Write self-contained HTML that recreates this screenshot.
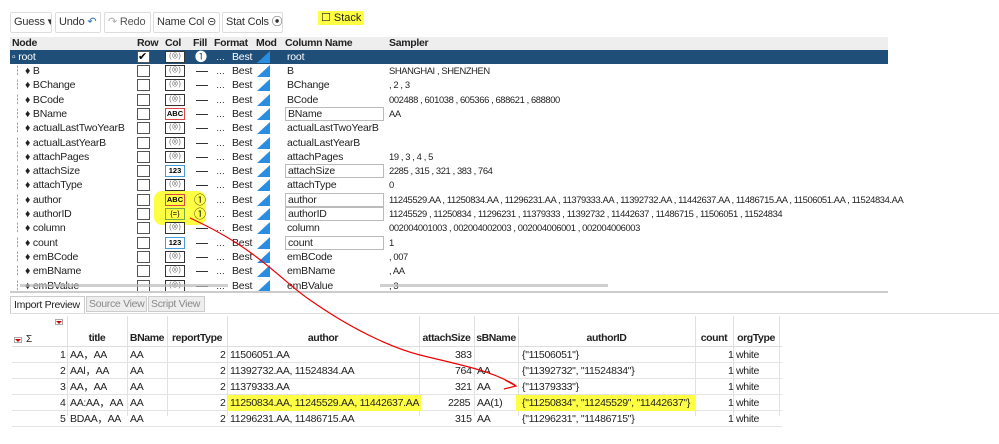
<!DOCTYPE html>
<html><head><meta charset="utf-8"><style>
*{box-sizing:border-box;margin:0;padding:0;white-space:nowrap}
body{width:999px;height:444px;background:#fff;font-family:"Liberation Sans","Noto Sans CJK SC",sans-serif;font-size:11px;color:#222;position:relative;overflow:hidden}
.a{position:absolute}
.btn{position:absolute;top:12px;height:21px;border:1px solid #ddd;border-radius:2px;background:#fff;font-size:11px;line-height:19px;padding:0 3px;color:#333;overflow:hidden;letter-spacing:-0.2px}
.hdr{position:absolute;left:10px;top:37px;width:878px;height:13px;background:#eee;font-weight:bold;font-size:10.5px;letter-spacing:-0.3px;line-height:13px}
.r{position:absolute;left:10px;width:878px;height:14px;line-height:14px;font-size:10.5px;letter-spacing:-0.2px}
.sel{background:#1f4e79;color:#fff}
.cb{position:absolute;left:127px;top:1px;width:13px;height:12px;border:1px solid #555;background:#fff}
.ci{position:absolute;left:155px;top:1px;width:20px;height:12px;border:1px solid #333;background:#fff;font-size:7px;line-height:10px;text-align:center;color:#666;letter-spacing:0}
.dash{position:absolute;left:186px;top:7px;width:12px;height:1px;background:#333}
.dots{position:absolute;left:206px;font-size:9px}
.best{position:absolute;left:222px}
.mod{position:absolute;left:247px;top:1px;width:0;height:0;border-left:13px solid transparent;border-bottom:12px solid #2a8de0}
.nm{position:absolute;left:2px}
.cn{position:absolute;left:275px;top:0;height:14px;width:99px;padding-left:2px}
.cn.b{border:1px solid #bbb;height:14px;line-height:12px}
.sm{position:absolute;left:379px;font-size:9.4px;letter-spacing:-0.4px}
.t{position:absolute;font-size:10.5px;letter-spacing:-0.3px}
.bh{position:absolute;top:332px;font-weight:bold;font-size:10.5px;letter-spacing:-0.4px;text-align:center}
.br{position:absolute;left:12px;width:770px;height:16px;line-height:16px;border-bottom:1px solid #e4e4e4}
.vl{position:absolute;top:316px;height:100px;width:1px;background:#e0e0e0}
.hl{background:#ffff44}
</style></head><body>
<div class="btn" style="left:10px;width:42px">Guess ▾</div>
<div class="btn" style="left:55px;width:46px">Undo <span style="color:#2a6fb5">↶</span></div>
<div class="btn" style="left:104px;width:47px;color:#555"><span style="color:#aaa">↷</span> Redo</div>
<div class="btn" style="left:153px;width:67px">Name Col ⊝</div>
<div class="btn" style="left:222px;width:61px">Stat Cols ⦿</div>
<div class="a hl" style="left:318px;top:11px;height:14px;padding:0 3px;font-size:11px;line-height:14px">☐ Stack</div>

<div class="hdr"><span class="a" style="left:2px">Node</span><span class="a" style="left:127px">Row</span><span class="a" style="left:155px">Col</span><span class="a" style="left:183px">Fill</span><span class="a" style="left:204px">Format</span><span class="a" style="left:246px">Mod</span><span class="a" style="left:275px">Column Name</span><span class="a" style="left:379px">Sampler</span></div>

<div class="r sel" style="top:50px"><span class="nm">▫ root</span><div class="cb" style="font-size:11px;line-height:10px;color:#000">✔</div><div class="ci">(⊗)</div><span class="a" style="left:185px;font-size:12px">➊</span><span class="dots" style="color:#fff">…</span><span class="best">Best</span><div class="mod"></div><span class="cn">root</span></div>

<div class="r" style="top:64px"><span class="nm">┆ ♦ B</span><div class="cb"></div><div class="ci">(⊗)</div><div class="dash"></div><span class="dots">…</span><span class="best">Best</span><div class="mod"></div><span class="cn">B</span><span class="sm">SHANGHAI , SHENZHEN</span></div>
<div class="r" style="top:78.3px"><span class="nm">┆ ♦ BChange</span><div class="cb"></div><div class="ci">(⊗)</div><div class="dash"></div><span class="dots">…</span><span class="best">Best</span><div class="mod"></div><span class="cn">BChange</span><span class="sm"> , 2 , 3</span></div>
<div class="r" style="top:92.6px"><span class="nm">┆ ♦ BCode</span><div class="cb"></div><div class="ci">(⊗)</div><div class="dash"></div><span class="dots">…</span><span class="best">Best</span><div class="mod"></div><span class="cn">BCode</span><span class="sm">002488 , 601038 , 605366 , 688621 , 688800</span></div>
<div class="r" style="top:106.9px"><span class="nm">┆ ♦ BName</span><div class="cb"></div><div class="ci" style="border-color:#d44;color:#000;font-weight:bold;font-size:7.5px">ABC</div><div class="dash"></div><span class="dots">…</span><span class="best">Best</span><div class="mod"></div><span class="cn b">BName</span><span class="sm">AA</span></div>
<div class="r" style="top:121.2px"><span class="nm">┆ ♦ actualLastTwoYearB</span><div class="cb"></div><div class="ci">(⊗)</div><div class="dash"></div><span class="dots">…</span><span class="best">Best</span><div class="mod"></div><span class="cn">actualLastTwoYearB</span></div>
<div class="r" style="top:135.5px"><span class="nm">┆ ♦ actualLastYearB</span><div class="cb"></div><div class="ci">(⊗)</div><div class="dash"></div><span class="dots">…</span><span class="best">Best</span><div class="mod"></div><span class="cn">actualLastYearB</span></div>
<div class="r" style="top:149.8px"><span class="nm">┆ ♦ attachPages</span><div class="cb"></div><div class="ci">(⊗)</div><div class="dash"></div><span class="dots">…</span><span class="best">Best</span><div class="mod"></div><span class="cn">attachPages</span><span class="sm">19 , 3 , 4 , 5</span></div>
<div class="r" style="top:164.1px"><span class="nm">┆ ♦ attachSize</span><div class="cb"></div><div class="ci" style="border-color:#4a9ad8;color:#000;font-weight:bold;font-size:7.5px">123</div><div class="dash"></div><span class="dots">…</span><span class="best">Best</span><div class="mod"></div><span class="cn b">attachSize</span><span class="sm">2285 , 315 , 321 , 383 , 764</span></div>
<div class="r" style="top:178.4px"><span class="nm">┆ ♦ attachType</span><div class="cb"></div><div class="ci">(⊗)</div><div class="dash"></div><span class="dots">…</span><span class="best">Best</span><div class="mod"></div><span class="cn">attachType</span><span class="sm">0</span></div>
<div class="a hl" style="left:154px;top:191px;width:52px;height:34px;border-radius:8px"></div>
<div class="r" style="top:192.7px"><span class="nm">┆ ♦ author</span><div class="cb"></div><div class="ci" style="border-color:#d44;color:#000;font-weight:bold;font-size:7.5px;background:#ff4">ABC</div><span class="a" style="left:184px;font-size:12px">①</span><span class="dots">…</span><span class="best">Best</span><div class="mod"></div><span class="cn b">author</span><span class="sm">11245529.AA , 11250834.AA , 11296231.AA , 11379333.AA , 11392732.AA , 11442637.AA , 11486715.AA , 11506051.AA , 11524834.AA</span></div>
<div class="r" style="top:207px"><span class="nm">┆ ♦ authorID</span><div class="cb"></div><div class="ci" style="border-color:#7a4;color:#000;font-size:7.5px;background:#ff4">{=}</div><span class="a" style="left:184px;font-size:12px">①</span><span class="dots">…</span><span class="best">Best</span><div class="mod"></div><span class="cn b">authorID</span><span class="sm">11245529 , 11250834 , 11296231 , 11379333 , 11392732 , 11442637 , 11486715 , 11506051 , 11524834</span></div>
<div class="r" style="top:221.3px"><span class="nm">┆ ♦ column</span><div class="cb"></div><div class="ci">(⊗)</div><div class="dash"></div><span class="dots">…</span><span class="best">Best</span><div class="mod"></div><span class="cn">column</span><span class="sm">002004001003 , 002004002003 , 002004006001 , 002004006003</span></div>
<div class="r" style="top:235.6px"><span class="nm">┆ ♦ count</span><div class="cb"></div><div class="ci" style="border-color:#4a9ad8;color:#000;font-weight:bold;font-size:7.5px">123</div><div class="dash"></div><span class="dots">…</span><span class="best">Best</span><div class="mod"></div><span class="cn b">count</span><span class="sm">1</span></div>
<div class="r" style="top:249.9px"><span class="nm">┆ ♦ emBCode</span><div class="cb"></div><div class="ci">(⊗)</div><div class="dash"></div><span class="dots">…</span><span class="best">Best</span><div class="mod"></div><span class="cn">emBCode</span><span class="sm"> , 007</span></div>
<div class="r" style="top:264.2px"><span class="nm">┆ ♦ emBName</span><div class="cb"></div><div class="ci">(⊗)</div><div class="dash"></div><span class="dots">…</span><span class="best">Best</span><div class="mod"></div><span class="cn">emBName</span><span class="sm"> , AA</span></div>
<div class="r" style="top:278.5px"><span class="nm">┆ ♦ emBValue</span><div class="cb"></div><div class="ci">(⊗)</div><div class="dash"></div><span class="dots">…</span><span class="best">Best</span><div class="mod"></div><span class="cn">emBValue</span><span class="sm"> , 3</span></div>
<div class="a" style="left:20px;top:284px;width:208px;height:3px;background:#bbb;opacity:.7"></div>
<div class="a" style="left:380px;top:284px;width:228px;height:3px;background:#bbb;opacity:.7"></div>
<div class="a" style="left:10px;top:291px;width:878px;height:2px;background:#ccc"></div>

<div class="a" style="left:10px;top:296px;width:75px;height:17px;border:1px solid #ccc;border-bottom:none;background:#fff;line-height:16px;padding-left:3px;font-size:10.5px;letter-spacing:-0.3px">Import Preview</div>
<div class="a" style="left:86px;top:296px;width:61px;height:16px;border:1px solid #ccc;background:#eee;line-height:15px;padding-left:2px;color:#888;font-size:10.5px;letter-spacing:-0.3px">Source View</div>
<div class="a" style="left:148px;top:296px;width:57px;height:16px;border:1px solid #ccc;background:#eee;line-height:15px;padding-left:2px;color:#888;font-size:10.5px;letter-spacing:-0.3px">Script View</div>
<div class="a" style="left:10px;top:313px;width:990px;height:1px;background:#ddd"></div>

<div class="vl" style="left:67px"></div><div class="vl" style="left:127px"></div><div class="vl" style="left:167px"></div><div class="vl" style="left:227px"></div><div class="vl" style="left:419px"></div><div class="vl" style="left:474px"></div><div class="vl" style="left:518px"></div><div class="vl" style="left:695px"></div><div class="vl" style="left:733px"></div><div class="vl" style="left:779px"></div>
<div class="a" style="left:55px;top:319px;width:8px;height:6px;border:1px solid #aaa;background:#fff"><div style="margin:1px auto;width:0;height:0;border-left:3px solid transparent;border-right:3px solid transparent;border-top:3px solid #c00"></div></div>
<div class="a" style="left:14px;top:337px;width:8px;height:6px;border:1px solid #aaa;background:#fff"><div style="margin:1px auto;width:0;height:0;border-left:3px solid transparent;border-right:3px solid transparent;border-top:3px solid #c00"></div></div>
<span class="a" style="left:26px;top:334px;font-size:10px">Σ</span>
<div class="a" style="left:12px;top:346px;width:770px;height:1px;background:#ddd"></div>
<span class="bh" style="left:67px;width:60px">title</span><span class="bh" style="left:127px;width:40px">BName</span><span class="bh" style="left:167px;width:60px">reportType</span><span class="bh" style="left:227px;width:192px">author</span><span class="bh" style="left:419px;width:55px">attachSize</span><span class="bh" style="left:474px;width:44px">sBName</span><span class="bh" style="left:518px;width:177px">authorID</span><span class="bh" style="left:695px;width:38px">count</span><span class="bh" style="left:733px;width:46px">orgType</span>

<div class="br" style="top:347px"><span class="t" style="left:48px">1</span><span class="t" style="left:58px">AA，AA</span><span class="t" style="left:118px">AA</span><span class="t" style="left:208px">2</span><span class="t" style="left:218px">11506051.AA</span><span class="t" style="left:443px">383</span><span class="t" style="left:510px">{"11506051"}</span><span class="t" style="left:716px">1</span><span class="t" style="left:724px">white</span></div>
<div class="br" style="top:363px"><span class="t" style="left:48px">2</span><span class="t" style="left:58px">AAl，AA</span><span class="t" style="left:118px">AA</span><span class="t" style="left:208px">2</span><span class="t" style="left:218px">11392732.AA, 11524834.AA</span><span class="t" style="left:443px">764</span><span class="t" style="left:465px">AA</span><span class="t" style="left:510px">{"11392732", "11524834"}</span><span class="t" style="left:716px">1</span><span class="t" style="left:724px">white</span></div>
<div class="br" style="top:379px"><span class="t" style="left:48px">3</span><span class="t" style="left:58px">AA，AA</span><span class="t" style="left:118px">AA</span><span class="t" style="left:208px">2</span><span class="t" style="left:218px">11379333.AA</span><span class="t" style="left:443px">321</span><span class="t" style="left:465px">AA</span><span class="t" style="left:510px">{"11379333"}</span><span class="t" style="left:716px">1</span><span class="t" style="left:724px">white</span></div>
<div class="br" style="top:395px"><span class="t" style="left:48px">4</span><span class="t" style="left:58px">AA:AA，AA</span><span class="t" style="left:118px">AA</span><span class="t" style="left:208px">2</span><span class="t hl" style="left:216px;padding:0 2px">11250834.AA, 11245529.AA, 11442637.AA</span><span class="t" style="left:436px">2285</span><span class="t" style="left:465px">AA(1)</span><span class="t hl" style="left:504px;padding:0 6px">{"11250834", "11245529", "11442637"}</span><span class="t" style="left:716px">1</span><span class="t" style="left:724px">white</span></div>
<div class="br" style="top:411px"><span class="t" style="left:48px">5</span><span class="t" style="left:58px">BDAA，AA</span><span class="t" style="left:118px">AA</span><span class="t" style="left:208px">2</span><span class="t" style="left:218px">11296231.AA, 11486715.AA</span><span class="t" style="left:443px">315</span><span class="t" style="left:465px">AA</span><span class="t" style="left:510px">{"11296231", "11486715"}</span><span class="t" style="left:716px">1</span><span class="t" style="left:724px">white</span></div>

<svg class="a" style="left:0;top:0" width="999" height="444"><path d="M190 218 C260 250 280 280 310 300 C360 335 400 350 420 355 C460 365 490 370 515 385" fill="none" stroke="#e00" stroke-width="1.2"/><path d="M505 380 L516 386 L504 389" fill="none" stroke="#e00" stroke-width="1.2"/></svg>
</body></html>
